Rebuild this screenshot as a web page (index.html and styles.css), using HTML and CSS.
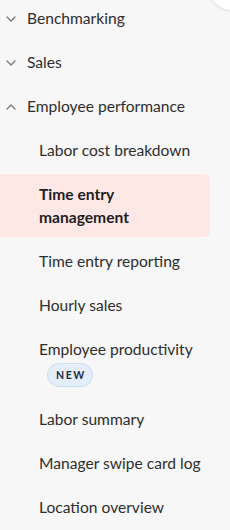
FILE: index.html
```html
<!DOCTYPE html>
<html lang="en">
<head>
<meta charset="utf-8">
<title>Reports navigation</title>
<link rel="stylesheet" href="styles.css">
</head>
<body>
<div class="page">
<div class="corner-button" aria-hidden="true"></div>
<nav class="nav">
  <ul class="nav-list">
    <li class="group">
      <div class="group-head">
        <svg class="chev" width="10" height="6" viewBox="0 0 10 6"><path d="M1 1 L5 5 L9 1" fill="none" stroke="#777" stroke-width="1.3" stroke-linecap="round" stroke-linejoin="round"/></svg>
        <span>Benchmarking</span>
      </div>
    </li>
    <li class="group">
      <div class="group-head">
        <svg class="chev" width="10" height="6" viewBox="0 0 10 6"><path d="M1 1 L5 5 L9 1" fill="none" stroke="#777" stroke-width="1.3" stroke-linecap="round" stroke-linejoin="round"/></svg>
        <span>Sales</span>
      </div>
    </li>
    <li class="group">
      <div class="group-head">
        <svg class="chev" width="10" height="6" viewBox="0 0 10 6"><path d="M1 5 L5 1 L9 5" fill="none" stroke="#777" stroke-width="1.3" stroke-linecap="round" stroke-linejoin="round"/></svg>
        <span>Employee performance</span>
      </div>
      <ul class="sub-list">
        <li class="sub-item">Labor cost breakdown</li>
        <li class="sub-item active">Time entry<br>management</li>
        <li class="sub-item">Time entry reporting</li>
        <li class="sub-item">Hourly sales</li>
        <li class="sub-item">Employee productivity
          <div class="badge-row"><span class="badge">NEW</span></div>
        </li>
        <li class="sub-item">Labor summary</li>
        <li class="sub-item">Manager swipe card log</li>
        <li class="sub-item">Location overview</li>
      </ul>
    </li>
  </ul>
</nav>
</div>
</body>
</html>
```
FILE: styles.css
```css
html, body {
  margin: 0;
  padding: 0;
  background: #f7f7f7;
}
body {
  font-family: "Lato", "Noto Sans", sans-serif;
  font-size: 15.6px;
  color: #2e2e2e;
}
.page {
  position: relative;
  width: 230px;
  height: 530px;
  overflow: hidden;
}
.corner-button {
  position: absolute;
  left: 205px;
  top: -51px;
  width: 62px;
  height: 62px;
  border-radius: 50%;
  background: #ffffff;
  box-shadow: 0 1px 3px rgba(0, 0, 0, 0.12);
}
.nav {
  width: 210px;
  margin-top: -2px;
}
.nav-list, .sub-list {
  list-style: none;
  margin: 0;
  padding: 0;
  display: flex;
  flex-direction: column;
  gap: 4px;
}
.group {
  display: flex;
  flex-direction: column;
  gap: 4px;
}
.group-head {
  display: flex;
  align-items: center;
  gap: 11px;
  padding: 9px 0 8px 6px;
  line-height: 23px;
}
.chev {
  display: block;
  flex: none;
}
.sub-item {
  padding: 9px 0 8px 39px;
  line-height: 23px;
  white-space: nowrap;
  border-radius: 0 5px 5px 0;
}
.sub-item.active {
  background: #fde8e6;
  font-weight: 700;
  color: #1e1e1e;
}
.badge-row {
  display: flex;
  padding-left: 8px;
  margin-top: 2px;
}
.badge {
  display: inline-block;
  height: 22px;
  line-height: 22px;
  padding: 0 6px 0 8px;
  border-radius: 12px;
  background: #e4eefa;
  border: 1px solid #cddcef;
  color: #1f2b40;
  font-size: 10.5px;
  font-weight: 700;
  letter-spacing: 1.6px;
}
```
